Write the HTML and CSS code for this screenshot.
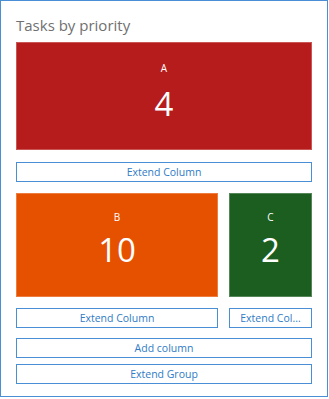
FILE: index.html
```html
<!DOCTYPE html>
<html lang="en">
<head>
    <meta charset="UTF-8">
    <title>Tasks by priority</title>
    <link rel="stylesheet" href="styles.css">
</head>
<body>
    <div class="board">
        <h1 class="board-title">Tasks by priority</h1>

        <div class="group">
            <div class="column">
                <div class="tile tile-red tile-tall">
                    <span class="tile-label">A</span>
                    <span class="tile-count">4</span>
                </div>
                <button class="action-btn">Extend Column</button>
            </div>

            <div class="column-row">
                <div class="column column-wide">
                    <div class="tile tile-orange">
                        <span class="tile-label">B</span>
                        <span class="tile-count">10</span>
                    </div>
                    <button class="action-btn">Extend Column</button>
                </div>
                <div class="column column-narrow">
                    <div class="tile tile-green">
                        <span class="tile-label">C</span>
                        <span class="tile-count">2</span>
                    </div>
                    <button class="action-btn">Extend Col...</button>
                </div>
            </div>
        </div>

        <div class="group-actions">
            <button class="action-btn">Add column</button>
            <button class="action-btn">Extend Group</button>
        </div>
    </div>
</body>
</html>
```

FILE: styles.css
```css
body {
    margin: 0;
    background: #fff;
    font-family: 'Open Sans', 'Noto Sans', sans-serif;
}

.board {
    width: 328px;
    height: 397px;
    box-sizing: border-box;
    border: 1px solid #4a8fd6;
    padding: 10px 15px 0 15px;
}

.board-title {
    margin: 0;
    height: 31px;
    font-size: 15px;
    font-weight: 400;
    line-height: 28px;
    color: #707070;
}

.group {
    display: flex;
    flex-direction: column;
    gap: 11px;
}

.column {
    display: flex;
    flex-direction: column;
    gap: 12px;
}

.column-row {
    display: flex;
    gap: 11px;
}

.column-row .column {
    gap: 11px;
}

.column-wide {
    width: 202px;
}

.column-narrow {
    flex: 1;
}

.tile {
    height: 104px;
    box-sizing: border-box;
    border: 1px solid rgba(255, 255, 255, 0.25);
    display: flex;
    flex-direction: column;
    align-items: center;
    color: #fff;
}

.tile-tall {
    height: 108px;
}

.tile-red {
    background: #b71c1c;
}

.tile-orange {
    background: #e65100;
}

.tile-green {
    background: #1b5e20;
}

.tile-label {
    margin-top: 16px;
    font-size: 10px;
    line-height: 14px;
}

.tile-count {
    margin-top: 4px;
    font-size: 33px;
    font-weight: 400;
    line-height: 44px;
}

.tile-tall .tile-label {
    margin-top: 18px;
}

.tile-tall .tile-count {
    margin-top: 7px;
}

.action-btn {
    display: block;
    width: 100%;
    height: 20px;
    padding: 0;
    background: #fff;
    border: 1px solid #4a8fd6;
    color: #2f7bc6;
    font-family: 'Open Sans', 'Noto Sans', sans-serif;
    font-size: 10.5px;
    line-height: 18px;
    white-space: nowrap;
    cursor: pointer;
}

.group-actions {
    margin-top: 10px;
    display: flex;
    flex-direction: column;
    gap: 6px;
}
```
